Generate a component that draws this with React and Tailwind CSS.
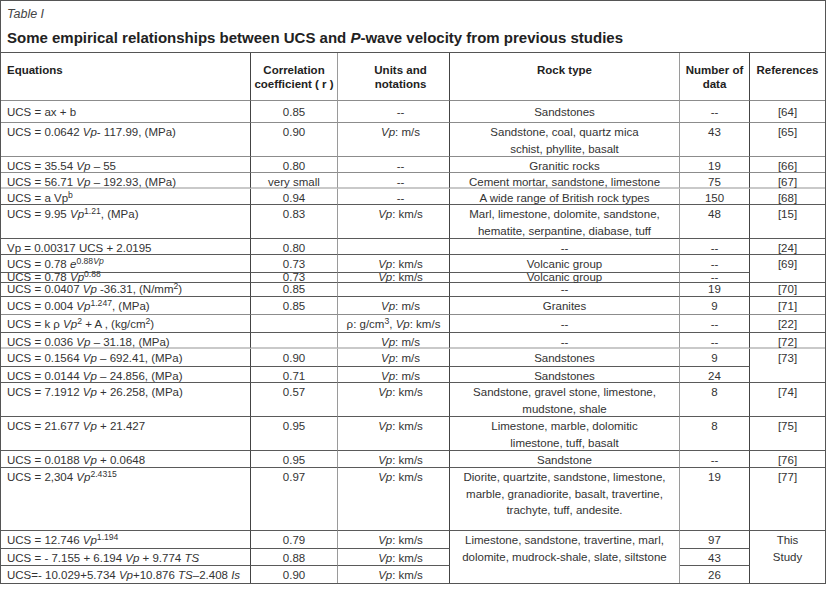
const SKIP = "__skip__";

// per-column base: vertical rule colour, alignment
const COL = [
  "border-r border-r-[#444] pl-[6px] text-left",
  "border-r border-r-[#9a9a9a] text-center",
  "border-r border-r-[#444] pl-[14px] text-center",
  "border-r border-r-[#9a9a9a] text-center",
  "border-r border-r-[#444] text-center",
  "text-center",
];

const DARK = "border-b border-b-[#5a5a5a]";
const GREY = "border-b border-b-[#8c8c8c]";
const LIGHT = "border-b-2 border-b-[#c9c9c9]";

const I = ({ children }) => <i>{children}</i>;

const ROWS = [
  {
    line: GREY,
    pad: "pt-[3px]",
    cells: ["UCS = ax + b", "0.85", "--", "Sandstones", "--", "[64]"],
  },
  {
    line: GREY,
    cells: [
      <>UCS = 0.0642 <I>Vp</I>- 117.99, (MPa)</>,
      "0.90",
      <><I>Vp</I>: m/s</>,
      <>Sandstone, coal, quartz mica<br />schist, phyllite, basalt</>,
      "43",
      "[65]",
    ],
  },
  {
    line: GREY,
    cells: [<>UCS = 35.54 <I>Vp</I> – 55</>, "0.80", "--", "Granitic rocks", "19", "[66]"],
  },
  {
    line: LIGHT,
    cells: [
      <>UCS = 56.71 <I>Vp</I> – 192.93, (MPa)</>,
      "very small",
      "--",
      "Cement mortar, sandstone, limestone",
      "75",
      "[67]",
    ],
  },
  {
    line: DARK,
    cells: [
      <>UCS = a Vp<sup>b</sup></>,
      "0.94",
      "--",
      "A wide range of British rock types",
      "150",
      "[68]",
    ],
  },
  {
    line: DARK,
    cells: [
      <>UCS = 9.95 <I>Vp</I><sup>1.21</sup>, (MPa)</>,
      "0.83",
      <><I>Vp</I>: km/s</>,
      <>Marl, limestone, dolomite, sandstone,<br />hematite, serpantine, diabase, tuff</>,
      "48",
      "[15]",
    ],
  },
  {
    line: DARK,
    cells: ["Vp = 0.00317 UCS + 2.0195", "0.80", "", "--", "--", "[24]"],
  },
  {
    line: DARK,
    cells: [
      <>UCS = 0.78 <I>e</I><sup>0.88<I>Vp</I></sup></>,
      "0.73",
      <><I>Vp</I>: km/s</>,
      "Volcanic group",
      "--",
      { v: "[69]", span: "row-span-2", line: DARK },
    ],
  },
  {
    line: DARK,
    pad: "-mt-[4px]",
    cells: [
      <>UCS = 0.78 <I>Vp</I><sup>0.88</sup></>,
      "0.73",
      <><I>Vp</I>: km/s</>,
      "Volcanic group",
      "--",
      SKIP,
    ],
  },
  {
    line: DARK,
    pad: "-mt-[2px]",
    cells: [
      <>UCS = 0.0407 <I>Vp</I> -36.31, (N/mm<sup>2</sup>)</>,
      "0.85",
      "",
      "--",
      "19",
      "[70]",
    ],
  },
  {
    line: GREY,
    cells: [
      <>UCS = 0.004 <I>Vp</I><sup>1.247</sup>, (MPa)</>,
      "0.85",
      <><I>Vp</I>: m/s</>,
      "Granites",
      "9",
      "[71]",
    ],
  },
  {
    line: DARK,
    cells: [
      <>UCS = k ρ <I>Vp</I><sup>2</sup> + A , (kg/cm<sup>2</sup>)</>,
      "",
      {
        v: <>ρ: g/cm<sup>3</sup>, <I>Vp</I>: km/s</>,
        cls: "border-r border-r-[#444] text-center pl-0 whitespace-nowrap",
      },
      "--",
      "--",
      "[22]",
    ],
  },
  {
    line: LIGHT,
    cells: [
      <>UCS = 0.036 <I>Vp</I> – 31.18, (MPa)</>,
      "",
      <><I>Vp</I>: m/s</>,
      "--",
      "--",
      "[72]",
    ],
  },
  {
    line: DARK,
    cells: [
      <>UCS = 0.1564 <I>Vp</I> – 692.41, (MPa)</>,
      "0.90",
      <><I>Vp</I>: m/s</>,
      "Sandstones",
      "9",
      { v: "[73]", span: "row-span-2", line: DARK },
    ],
  },
  {
    line: DARK,
    cells: [
      <>UCS = 0.0144 <I>Vp</I> – 24.856, (MPa)</>,
      "0.71",
      <><I>Vp</I>: m/s</>,
      "Sandstones",
      "24",
      SKIP,
    ],
  },
  {
    line: DARK,
    cells: [
      <>UCS = 7.1912 <I>Vp</I> + 26.258, (MPa)</>,
      "0.57",
      <><I>Vp</I>: km/s</>,
      <>Sandstone, gravel stone, limestone,<br />mudstone, shale</>,
      "8",
      "[74]",
    ],
  },
  {
    line: DARK,
    cells: [
      <>UCS = 21.677 <I>Vp</I> + 21.427</>,
      "0.95",
      <><I>Vp</I>: km/s</>,
      <>Limestone, marble, dolomitic<br />limestone, tuff, basalt</>,
      "8",
      "[75]",
    ],
  },
  {
    line: DARK,
    cells: [
      <>UCS = 0.0188 <I>Vp</I> + 0.0648</>,
      "0.95",
      <><I>Vp</I>: km/s</>,
      "Sandstone",
      "--",
      "[76]",
    ],
  },
  {
    line: DARK,
    cells: [
      <>UCS = 2,304 <I>Vp</I><sup>2.4315</sup></>,
      "0.97",
      <><I>Vp</I>: km/s</>,
      <>
        Diorite, quartzite, sandstone, limestone,<br />
        marble, granadiorite, basalt, travertine,<br />
        trachyte, tuff, andesite.
      </>,
      "19",
      "[77]",
    ],
  },
  {
    line: DARK,
    cells: [
      <>UCS = 12.746 <I>Vp</I><sup>1.194</sup></>,
      "0.79",
      <><I>Vp</I>: km/s</>,
      {
        v: <>Limestone, sandstone, travertine, marl,<br />dolomite, mudrock-shale, slate, siltstone</>,
        span: "row-span-3",
        line: "",
      },
      "97",
      { v: <>This<br />Study</>, span: "row-span-3", line: "" },
    ],
  },
  {
    line: DARK,
    cells: [
      <>UCS = - 7.155 + 6.194 <I>Vp</I> + 9.774 <I>TS</I></>,
      "0.88",
      <><I>Vp</I>: km/s</>,
      SKIP,
      "43",
      SKIP,
    ],
  },
  {
    line: "",
    cells: [
      <>UCS=- 10.029+5.734 <I>Vp</I>+10.876 <I>TS</I>–2.408 <I>Is</I></>,
      "0.90",
      <><I>Vp</I>: km/s</>,
      SKIP,
      "26",
      SKIP,
    ],
  },
];

const HEAD = [
  "Equations",
  <>Correlation<br />coefficient ( r )</>,
  <>Units and<br />notations</>,
  "Rock type",
  <>Number of<br />data</>,
  "References",
];

export default function App() {
  return (
    <div className="w-[827px] h-[604px] bg-white font-['Liberation_Sans',Arial,sans-serif] text-[#333]">
      <div className="w-[826px] border border-[#555]">
        {/* caption */}
        <div className="h-[52px] border-b border-b-[#555] pl-[6px] pt-[5px]">
          <div className="text-[12.5px] italic leading-[16px] text-[#444]">Table I</div>
          <div className="mt-[7px] text-[15px] font-bold leading-[18px] text-[#222]">
            Some empirical relationships between UCS and <i>P</i>-wave velocity from previous studies
          </div>
        </div>

        <div className="grid grid-cols-[250px_87px_112px_230px_70px_75px] grid-rows-[48px_22px_34px_16px_16px_16px_34px_16px_18px_10px_14px_18px_18px_16px_18px_16px_34px_34px_17px_63px_18px_17px_17px] text-[11.5px] leading-[16.5px]">
          {HEAD.map((h, i) => (
            <div
              key={i}
              className={`${COL[i]} ${i === 2 ? "pl-0" : ""} border-b border-b-[#8c8c8c] pt-[10px] text-[11.5px] font-bold leading-[14px] text-[#222]`}
            >
              {h}
            </div>
          ))}

          {ROWS.map((row, r) =>
            row.cells.map((c, i) => {
              if (c === SKIP) return null;
              const obj = c && typeof c === "object" && "v" in c ? c : { v: c };
              const line = obj.line !== undefined ? obj.line : row.line;
              return (
                <div
                  key={`${r}-${i}`}
                  className={`${obj.cls || COL[i]} ${obj.span || ""} ${line} overflow-visible whitespace-nowrap`}
                >
                  <div className={row.pad || "pt-px"}>{obj.v}</div>
                </div>
              );
            })
          )}
        </div>
      </div>
    </div>
  );
}
